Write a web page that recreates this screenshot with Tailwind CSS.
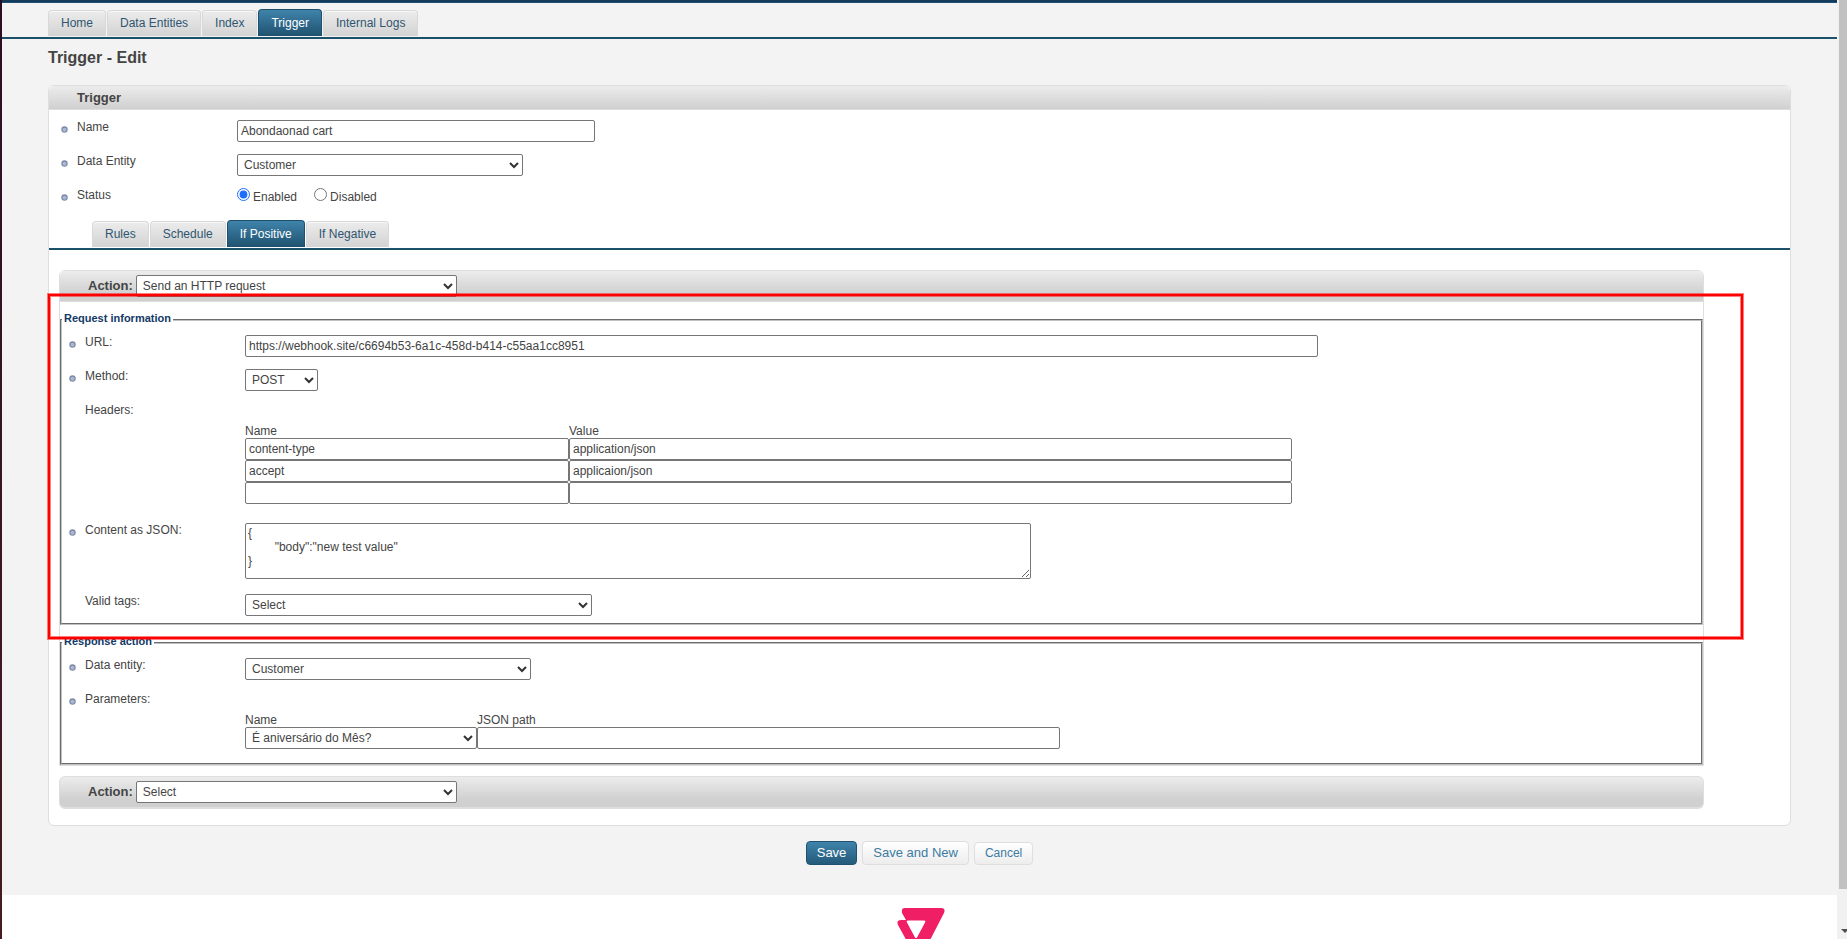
<!DOCTYPE html>
<html lang="en">

<head>
    <meta charset="UTF-8">
    <meta name="viewport" content="width=device-width, initial-scale=1.0">
    <title>Trigger - Edit</title>
    <script src="https://cdn.jsdelivr.net/npm/@tailwindcss/browser@4"></script>
</head>

<body class="relative h-screen overflow-hidden bg-white font-['Liberation_Sans',Arial,sans-serif] text-xs leading-[14px] text-[#444]">
<svg class="hidden">
    <symbol id="bullet" viewBox="0 0 7 7">
        <circle cx="3.5" cy="3.5" r="3.2" fill="#7c8aa6" />
        <circle cx="3.5" cy="3.8" r="2" fill="#a9b8d2" />
    </symbol>
    <symbol id="chevron" viewBox="0 0 10 7">
        <path d="M1 1l4 4 4-4" fill="none" stroke="#333" stroke-width="2" />
    </symbol>
</svg>

<div class="ml-[2px] mr-[10px] bg-[#f3f3f3] h-[895px]">
    <!-- Main navigation -->
    <div class="h-[3px] bg-[#123a5c] border-b border-[#1f4e6e]"></div>
    <nav class="flex items-end gap-px h-[36px] pl-[46px] pb-px border-b-2 border-[#1b506b]">
        <a href="#" class="h-[26px] px-3 leading-[24px] rounded-t border border-[#d8d8d8] border-b-0 bg-linear-to-b from-[#ececec] to-[#d3d3d3] inset-shadow-[0_1px_0_#f8f8f8] text-[#2f5570]">Home</a>
        <a href="#" class="h-[26px] px-3 leading-[24px] rounded-t border border-[#d8d8d8] border-b-0 bg-linear-to-b from-[#ececec] to-[#d3d3d3] inset-shadow-[0_1px_0_#f8f8f8] text-[#2f5570]">Data Entities</a>
        <a href="#" class="h-[26px] px-3 leading-[24px] rounded-t border border-[#d8d8d8] border-b-0 bg-linear-to-b from-[#ececec] to-[#d3d3d3] inset-shadow-[0_1px_0_#f8f8f8] text-[#2f5570]">Index</a>
        <a href="#" class="h-[27px] px-3 leading-[26px] rounded-t border border-[#1d4f6c] border-b-0 bg-linear-to-b from-[#3f84ab] to-[#205270] text-white">Trigger</a>
        <a href="#" class="h-[26px] px-3 leading-[24px] rounded-t border border-[#d8d8d8] border-b-0 bg-linear-to-b from-[#ececec] to-[#d3d3d3] inset-shadow-[0_1px_0_#f8f8f8] text-[#2f5570]">Internal Logs</a>
    </nav>

    <form class="ml-[46px] mr-[46px]">
        <h1 class="h-[46px] pt-[9px] text-base leading-[20px] font-bold">Trigger - Edit</h1>

        <div class="rounded-md border border-[#dedede] bg-white pb-4">
            <h2 class="h-6 pl-7 text-[13px] leading-[24px] font-bold rounded-t-md border-b border-[#dedede] bg-linear-to-b from-[#ececec] to-[#d0d0d0]">Trigger</h2>

            <div class="grid grid-cols-[160px_1fr] grid-rows-[34px_34px_32px] ml-7 pt-[10px]">
                <label for="name" class="relative"><svg class="absolute -left-4 top-[6px] size-[7px]"><use href="#bullet" /></svg>Name</label>
                <div><input id="name" type="text" value="Abondaonad cart" class="block w-[358px] h-[22px] px-[3px] border border-[#767676] rounded-[2px] bg-white"></div>
                <label for="entity" class="relative"><svg class="absolute -left-4 top-[6px] size-[7px]"><use href="#bullet" /></svg>Data Entity</label>
                <div class="relative w-[286px]">
                    <select id="entity" class="block appearance-none w-full h-[22px] px-[6px] border border-[#767676] rounded-[2px] bg-white"><option>Customer</option></select>
                    <svg class="absolute right-1 top-2 w-[10px] h-[7px] pointer-events-none"><use href="#chevron" /></svg>
                </div>
                <span class="relative"><svg class="absolute -left-4 top-[6px] size-[7px]"><use href="#bullet" /></svg>Status</span>
                <div class="flex items-start gap-[17px]">
                    <label class="flex gap-[3px] pt-[2px]"><input type="radio" name="status" class="size-[13px] -mt-[2px] accent-[#1f6dff]" checked>Enabled</label>
                    <label class="flex gap-[3px] pt-[2px]"><input type="radio" name="status" class="size-[13px] -mt-[2px] accent-[#1f6dff]">Disabled</label>
                </div>
            </div>

            <!-- Trigger sections -->
            <nav class="flex items-end gap-px pl-[43px] pb-px border-b-2 border-[#1b506b]">
                <a href="#" class="h-[26px] px-3 leading-[24px] rounded-t border border-[#d8d8d8] border-b-0 bg-linear-to-b from-[#ececec] to-[#d3d3d3] inset-shadow-[0_1px_0_#f8f8f8] text-[#2f5570]">Rules</a>
                <a href="#" class="h-[26px] px-3 leading-[24px] rounded-t border border-[#d8d8d8] border-b-0 bg-linear-to-b from-[#ececec] to-[#d3d3d3] inset-shadow-[0_1px_0_#f8f8f8] text-[#2f5570]">Schedule</a>
                <a href="#" class="h-[27px] px-3 leading-[26px] rounded-t border border-[#1d4f6c] border-b-0 bg-linear-to-b from-[#3f84ab] to-[#205270] text-white">If Positive</a>
                <a href="#" class="h-[26px] px-3 leading-[24px] rounded-t border border-[#d8d8d8] border-b-0 bg-linear-to-b from-[#ececec] to-[#d3d3d3] inset-shadow-[0_1px_0_#f8f8f8] text-[#2f5570]">If Negative</a>
            </nav>

            <div class="relative mt-5 ml-[10px] mr-[86px]">
                <!-- First action -->
                <div class="rounded-t-md border border-[#dedede]">
                    <div class="flex items-start gap-[3px] h-[31px] pt-1 pl-7 rounded-t-md border-b border-[#dedede] bg-linear-to-b from-[#ececec] to-[#d0d0d0] to-75%">
                        <label for="action1" class="text-[13px] leading-[22px] font-bold">Action:</label>
                        <div class="relative w-[321px]">
                            <select id="action1" class="block appearance-none w-full h-[22px] px-[6px] border border-[#767676] rounded-[2px] bg-white"><option>Send an HTTP request</option></select>
                            <svg class="absolute right-1 top-2 w-[10px] h-[7px] pointer-events-none"><use href="#chevron" /></svg>
                        </div>
                    </div>

                    <fieldset class="mt-[10px] border-2 [border-style:groove] border-[#c0c0c0] pb-[7px]">
                        <legend class="ml-0 px-[2px] pb-[2px] text-[11px] leading-[13px] font-bold text-[#123a66]">Request information</legend>
                        <div class="grid grid-cols-[160px_1fr] ml-[23px] pt-2">
                            <label for="url" class="relative"><svg class="absolute -left-4 top-[6px] size-[7px]"><use href="#bullet" /></svg>URL:</label>
                            <div class="h-[34px]"><input id="url" type="text" value="https://webhook.site/c6694b53-6a1c-458d-b414-c55aa1cc8951" class="block w-[1073px] max-w-full h-[22px] px-[3px] border border-[#767676] rounded-[2px] bg-white"></div>
                            <label for="method" class="relative"><svg class="absolute -left-4 top-[6px] size-[7px]"><use href="#bullet" /></svg>Method:</label>
                            <div class="relative w-[73px] h-[34px]">
                                <select id="method" class="block appearance-none w-full h-[22px] px-[6px] border border-[#767676] rounded-[2px] bg-white"><option>POST</option></select>
                                <svg class="absolute right-1 top-2 w-[10px] h-[7px] pointer-events-none"><use href="#chevron" /></svg>
                            </div>
                            <span>Headers:</span>
                            <div class="pt-[21px] pb-[19px]">
                                <table class="w-[1047px] max-w-full table-fixed">
                                    <thead>
                                        <tr class="text-left"><th class="w-[324px] font-normal">Name</th><th class="font-normal">Value</th></tr>
                                    </thead>
                                    <tbody>
                                        <tr>
                                            <td><input type="text" aria-label="Header name 1" value="content-type" class="block w-full h-[22px] px-[3px] border border-[#767676] rounded-[2px] bg-white"></td>
                                            <td><input type="text" aria-label="Header value 1" value="application/json" class="block w-full h-[22px] px-[3px] border border-[#767676] rounded-[2px] bg-white"></td>
                                        </tr>
                                        <tr>
                                            <td><input type="text" aria-label="Header name 2" value="accept" class="block w-full h-[22px] px-[3px] border border-[#767676] rounded-[2px] bg-white"></td>
                                            <td><input type="text" aria-label="Header value 2" value="applicaion/json" class="block w-full h-[22px] px-[3px] border border-[#767676] rounded-[2px] bg-white"></td>
                                        </tr>
                                        <tr>
                                            <td><input type="text" aria-label="Header name 3" class="block w-full h-[22px] px-[3px] border border-[#767676] rounded-[2px] bg-white"></td>
                                            <td><input type="text" aria-label="Header value 3" class="block w-full h-[22px] px-[3px] border border-[#767676] rounded-[2px] bg-white"></td>
                                        </tr>
                                    </tbody>
                                </table>
                            </div>
                            <label for="content" class="relative"><svg class="absolute -left-4 top-[6px] size-[7px]"><use href="#bullet" /></svg>Content as JSON:</label>
                            <div class="h-[71px]"><textarea id="content" class="block w-[786px] h-14 p-[2px] border border-[#767676] rounded-[2px] bg-white overflow-hidden [tab-size:8]">{
	"body":"new test value"
}</textarea></div>
                            <label for="tags">Valid tags:</label>
                            <div class="relative w-[347px]">
                                <select id="tags" class="block appearance-none w-full h-[22px] px-[6px] border border-[#767676] rounded-[2px] bg-white"><option>Select</option></select>
                                <svg class="absolute right-1 top-2 w-[10px] h-[7px] pointer-events-none"><use href="#chevron" /></svg>
                            </div>
                        </div>
                    </fieldset>

                    <fieldset class="mt-[10px] border-2 [border-style:groove] border-[#c0c0c0] pb-[14px]">
                        <legend class="ml-0 px-[2px] pb-[2px] text-[11px] leading-[13px] font-bold text-[#123a66]">Response action</legend>
                        <div class="grid grid-cols-[160px_1fr] ml-[23px] pt-2">
                            <label for="entity2" class="relative"><svg class="absolute -left-4 top-[6px] size-[7px]"><use href="#bullet" /></svg>Data entity:</label>
                            <div class="relative w-[286px] h-[34px]">
                                <select id="entity2" class="block appearance-none w-full h-[22px] px-[6px] border border-[#767676] rounded-[2px] bg-white"><option>Customer</option></select>
                                <svg class="absolute right-1 top-2 w-[10px] h-[7px] pointer-events-none"><use href="#chevron" /></svg>
                            </div>
                            <span class="relative"><svg class="absolute -left-4 top-[6px] size-[7px]"><use href="#bullet" /></svg>Parameters:</span>
                            <div class="pt-[21px]">
                                <table class="w-[815px] max-w-full table-fixed">
                                    <thead>
                                        <tr class="text-left"><th class="w-[232px] font-normal">Name</th><th class="font-normal">JSON path</th></tr>
                                    </thead>
                                    <tbody>
                                        <tr>
                                            <td class="relative">
                                                <select aria-label="Parameter name" class="block appearance-none w-full h-[22px] px-[6px] border border-[#767676] rounded-[2px] bg-white"><option>É aniversário do Mês?</option></select>
                                                <svg class="absolute right-1 top-2 w-[10px] h-[7px] pointer-events-none"><use href="#chevron" /></svg>
                                            </td>
                                            <td><input type="text" aria-label="JSON path" class="block w-full h-[22px] px-[3px] border border-[#767676] rounded-[2px] bg-white"></td>
                                        </tr>
                                    </tbody>
                                </table>
                            </div>
                        </div>
                    </fieldset>
                </div>

                <!-- Second action -->
                <div class="flex items-start gap-[3px] h-[33px] mt-[10px] pt-1 pl-7 rounded-md border border-b-2 border-[#dedede] bg-linear-to-b from-[#ececec] to-[#d0d0d0] to-75%">
                    <label for="action2" class="text-[13px] leading-[22px] font-bold">Action:</label>
                    <div class="relative w-[321px]">
                        <select id="action2" class="block appearance-none w-full h-[22px] px-[6px] border border-[#767676] rounded-[2px] bg-white"><option>Select</option></select>
                        <svg class="absolute right-1 top-2 w-[10px] h-[7px] pointer-events-none"><use href="#chevron" /></svg>
                    </div>
                </div>

                <!-- Highlight over the request settings -->
                <div class="absolute -left-3 -right-[40px] top-[23px] h-[347px] border border-[#ff0000]/50 pointer-events-none">
                    <div class="h-full border-2 border-[#ff0000] outline-1 -outline-offset-3 outline-[#ff0000]/50"></div>
                </div>
            </div>
        </div>

        <div class="flex justify-center items-end gap-[5px] pt-[15px]">
            <button type="button" class="h-6 px-[10px] text-[13px] leading-[22px] rounded border border-[#205270] bg-linear-to-b from-[#3f84ab] to-[#245a7a] text-white">Save</button>
            <button type="button" class="h-6 px-[10px] text-[13px] leading-[22px] rounded border border-[#dedede] bg-linear-to-b from-white to-[#ededed] text-[#3b7ba3]">Save and New</button>
            <button type="button" class="h-[23px] px-[10px] leading-[21px] rounded border border-[#dedede] bg-linear-to-b from-white to-[#ededed] text-[#3b7ba3]">Cancel</button>
        </div>
    </form>
</div>

<footer class="flex justify-center pt-[13px] mr-[6px]">
    <svg class="w-12 h-[42px]" viewBox="0 0 48 42" role="img" aria-label="VTEX">
        <path d="M8 0h36q5 0 3 5L31 36q-3 6-8 6h-4q-5 0-7-5L1 17q-2-5 3-5h5L5 5q-1-5 3-5z" fill="#f01e64" />
        <path d="M11 12.5h16q2 0 1 2l-8 15q-1 1-2 0l-8-15q-1-2 1-2z" fill="#fff" />
    </svg>
</footer>

<!-- Window edge and scrollbar -->
<div class="absolute left-0 top-0 w-[2px] h-full bg-linear-to-b from-[#2c0e24] to-[#481a20]"></div>
<div class="absolute right-0 top-0 w-[10px] h-full pl-[2px] bg-[#f1f1f1] overflow-hidden">
    <div class="h-[889px] bg-[#c1c1c1]"></div>
    <svg class="w-2 h-[50px]" viewBox="0 0 8 50"><path d="M2 40h8L6 44z" fill="#505050" /></svg>
</div>
</body>

</html>
